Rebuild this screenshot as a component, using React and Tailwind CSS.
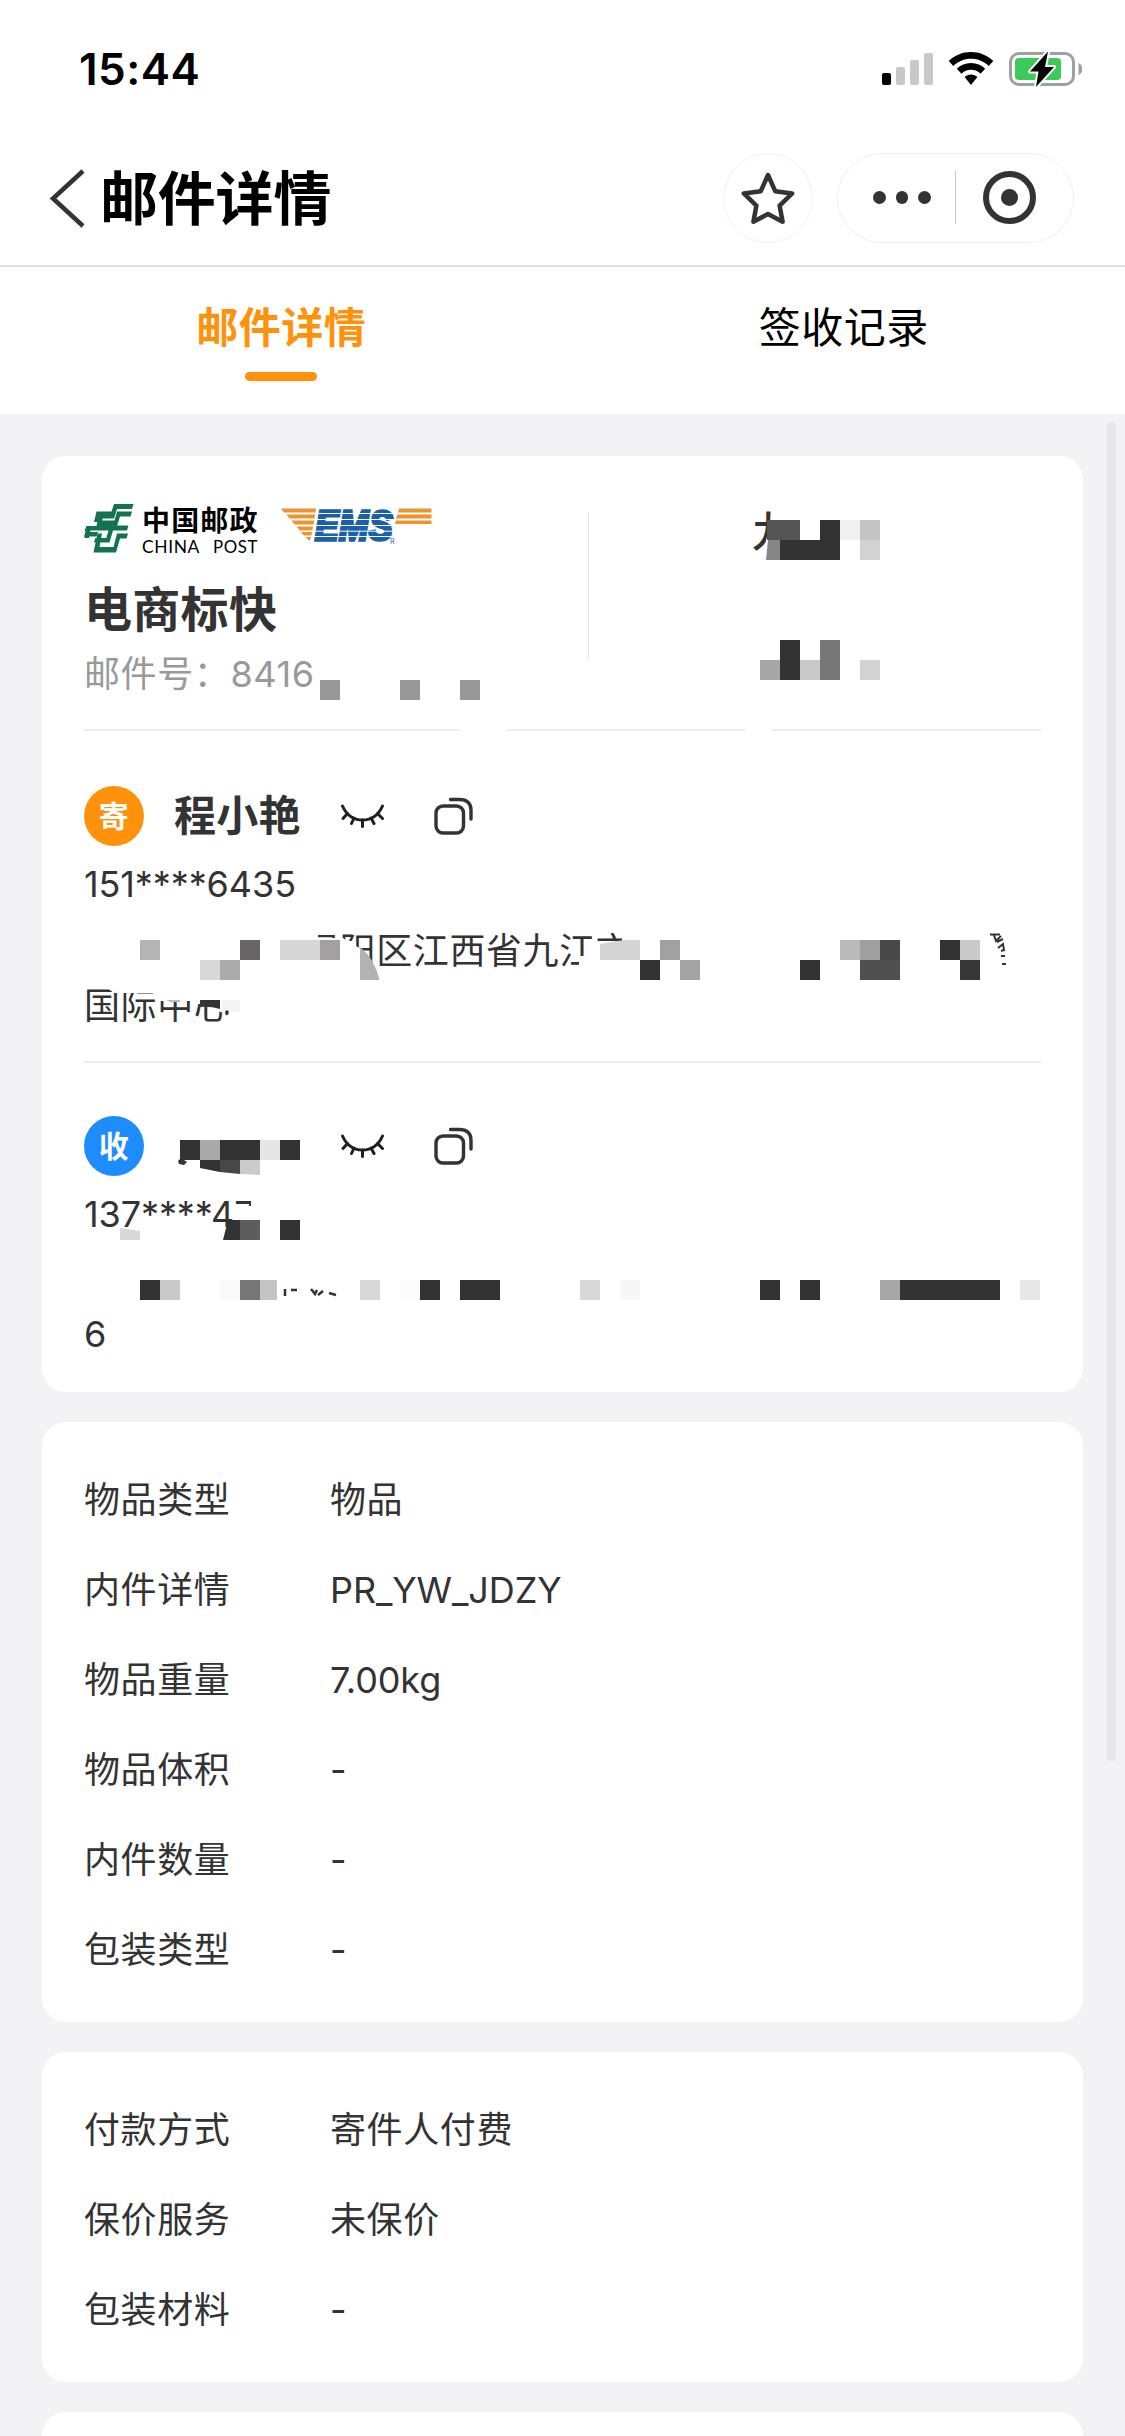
const itemInfo = [
  { label: "物品类型", value: "物品" },
  { label: "内件详情", value: "PR_YW_JDZY", latin: true },
  { label: "物品重量", value: "7.00kg", latin: true },
  { label: "物品体积", value: "-" },
  { label: "内件数量", value: "-" },
  { label: "包装类型", value: "-" },
];

const payInfo = [
  { label: "付款方式", value: "寄件人付费" },
  { label: "保价服务", value: "未保价" },
  { label: "包装材料", value: "-" },
];

// Privacy mosaic, [x, y, width, height, color] in screen pixels
const mosaic = [
  // tracking number
  [320, 680, 20, 20, "#999999"],
  [400, 680, 20, 20, "#999999"],
  [460, 680, 20, 20, "#999999"],
  // destination
  [767, 520, 33, 20, "#555555"],
  [820, 520, 20, 20, "#333333"],
  [840, 520, 20, 20, "#f0f0f0"],
  [860, 520, 20, 20, "#c4c4c4"],
  [780, 540, 60, 20, "#333333"],
  [860, 540, 20, 20, "#d2d2d2"],
  [780, 640, 20, 40, "#333333"],
  [820, 640, 20, 40, "#777777"],
  [760, 660, 20, 20, "#a6a6a6"],
  [800, 660, 20, 20, "#c9c9c9"],
  [860, 660, 20, 20, "#d2d2d2"],
  // sender address
  [140, 940, 20, 20, "#b4b4b4"],
  [240, 940, 20, 20, "#676565"],
  [280, 940, 40, 20, "#d8d7d7"],
  [320, 940, 20, 20, "#a2a0a0"],
  [200, 960, 20, 20, "#d9d9d9"],
  [220, 960, 20, 20, "#ababab"],
  [660, 940, 20, 20, "#a1a1a1"],
  [640, 960, 20, 20, "#333333"],
  [680, 960, 20, 20, "#a3a3a3"],
  [800, 960, 20, 20, "#333333"],
  [840, 940, 20, 20, "#bababa"],
  [860, 940, 20, 20, "#9f9f9f"],
  [880, 940, 20, 20, "#484848"],
  [860, 960, 40, 20, "#505050"],
  [940, 940, 20, 20, "#333333"],
  [960, 940, 20, 20, "#cacaca"],
  [960, 960, 20, 20, "#373737"],
  // receiver name
  [180, 1140, 20, 20, "#333333"],
  [200, 1140, 20, 20, "#a9a9a9"],
  [220, 1140, 40, 20, "#333333"],
  [260, 1140, 20, 20, "#e6e6e6"],
  [280, 1140, 20, 20, "#333333"],
  // receiver phone
  [240, 1220, 20, 20, "#5d5d5d"],
  [280, 1220, 20, 20, "#333333"],
  // receiver address
  [140, 1280, 20, 20, "#333333"],
  [160, 1280, 20, 20, "#c9c9c9"],
  [220, 1280, 20, 20, "#fafafa"],
  [240, 1280, 20, 20, "#767676"],
  [260, 1280, 17, 20, "#c4c4c4"],
  [360, 1280, 20, 20, "#d8d8d8"],
  [400, 1280, 20, 20, "#fbfbfb"],
  [420, 1280, 20, 20, "#333333"],
  [460, 1280, 40, 20, "#333333"],
  [580, 1280, 20, 20, "#d9d9d9"],
  [620, 1280, 20, 20, "#f7f7f7"],
  [760, 1280, 20, 20, "#333333"],
  [800, 1280, 20, 20, "#333333"],
  [880, 1280, 20, 20, "#a7a7a7"],
  [900, 1280, 100, 20, "#333333"],
  [1020, 1280, 20, 20, "#e8e8e8"],
];

const StatusBar = () => (
  <div className="flex h-[132px] items-start justify-between pr-[43px] pl-[79px]">
    <span className="mt-[42px] text-[44px] leading-[54px] font-semibold tracking-[0.5px] text-black">
      15:44
    </span>
    <svg className="mt-[50px]" width="201" height="38" viewBox="881 50 201 38">
      <rect x="882" y="73" width="9" height="12" rx="2" fill="#000" />
      <rect x="896" y="67" width="9" height="18" rx="2" fill="#c8c8c8" />
      <rect x="910" y="60" width="9" height="25" rx="2" fill="#c8c8c8" />
      <rect x="924" y="53" width="9" height="32" rx="2" fill="#c8c8c8" />
      {/* wifi */}
      <path d="M971 52c8.600 0 16.500 3.400 22.300 9l-4.600 5c-4.700-4.500-10.700-7.200-17.700-7.200s-13 2.700-17.700 7.200l-4.600-5c5.800-5.600 13.700-9 22.300-9z" />
      <path d="M971 63c5.500 0 10.500 2.200 14.200 5.700l-4.700 5c-2.500-2.400-5.700-3.900-9.500-3.900s-7 1.500-9.500 3.900l-4.700-5c3.700-3.500 8.700-5.700 14.200-5.700z" />
      <path d="M971 74.500c2.500 0 4.700 1 6.400 2.500l-6.400 8-6.400-8c1.700-1.500 3.900-2.500 6.400-2.500z" />
      {/* battery */}
      <rect x="1010.500" y="53.500" width="63" height="31" rx="8.500" fill="none" stroke="#a0a0a0" strokeWidth="3" />
      <path d="M1078.500 63c2.600 1 3.800 3.300 3.800 6s-1.200 5-3.800 6z" fill="#a0a0a0" />
      <rect x="1015" y="58" width="46" height="22" rx="4" fill="#3ccb5a" />
      <path d="M1048 51.500L1030 71.500h8.500L1036 87l18-20h-9z" fill="#000" stroke="#fff" strokeWidth="4" paintOrder="stroke" strokeLinejoin="round" />
    </svg>
  </div>
);

const NavBar = () => (
  <div className="flex h-[135px] items-center border-b-2 border-[#e0e0e0] pr-[51px] pl-[49px]">
    <svg width="36" height="60" viewBox="49 169 36 60" fill="none" stroke="#333" strokeWidth="4.500">
      <path d="M83 171L53 198.500L83 226" />
    </svg>
    <h1 className="ml-[15px] text-[58px] leading-[80px] font-bold tracking-[-0.2px] text-black">邮件详情</h1>
    <div className="ml-auto flex -translate-y-px gap-[24px]">
      <div className="flex size-[90px] items-center justify-center rounded-full border border-[#f0f0f0]">
        <svg width="54" height="54" viewBox="741 170 54 54" fill="none" stroke="#333" strokeWidth="4.500" strokeLinejoin="round">
          <path d="M768 174l7.200 16.200 17 2.200-12.600 12.300 3 16-14.600-7.700-14.600 7.700 3-16-12.600-12.300 17-2.200z" />
        </svg>
      </div>
      <div className="flex h-[90px] w-[237px] items-center rounded-full border border-[#f0f0f0] pl-[35px]">
        <div className="flex gap-[10px]">
          <span className="size-[12.500px] rounded-full bg-[#333]" />
          <span className="size-[12.500px] rounded-full bg-[#333]" />
          <span className="size-[12.500px] rounded-full bg-[#333]" />
        </div>
        <div className="ml-[24px] h-[53px] w-px bg-[#c4c4c4]" />
        <div className="ml-[27px] flex size-[53px] items-center justify-center rounded-full border-[6px] border-[#333]">
          <span className="size-[17px] rounded-full bg-[#333]" />
        </div>
      </div>
    </div>
  </div>
);

const Tabs = () => (
  <div className="flex h-[147px] pt-[31px] text-[42px] leading-[60px] tracking-[0.5px]">
    <div className="flex flex-1 flex-col items-center font-bold text-[#ff920c]">
      邮件详情
      <span className="mt-[14px] h-[9px] w-[72px] rounded-full bg-[#ff920c]" />
    </div>
    <div className="flex-1 text-center text-black">签收记录</div>
  </div>
);

const ChinaPostLogo = () => (
  <svg width="180" height="60" viewBox="84 502 180 60">
    <g fill="#14734f">
      <path d="M114 504h19.500l-1.500 5h-15l-3 9.500h-14.500l-1 3.500h-4.500l2.500-10.500h15z" />
      <path d="M117 511.500h15l-1.500 5h-10.500l-3 9.500h-14.500l-1 3h-3.500l2.500-8.500h14z" />
      <path d="M86.500 526h10l2-10h4.500l-1.500 9.500h27l-1.500 5h-14l-3.500 12h-15.500l1.300-4.500h11l2.200-7.500h-18l-1.500 7.500h-4.500l1-7h-1z" />
      <path d="M85.500 532h12.500l-1.500 4.500h-12.500z" />
      <path d="M117 533.500h11l-1.500 5h-6.500l-4 14h-22.500l4-19h4.500l-2.500 13.500h14z" />
    </g>
    <text x="142" y="531" fontSize="28" fontWeight="700" textLength="116" fill="#000">中国邮政</text>
    <text x="142" y="552.500" fontSize="17.500" textLength="58" lengthAdjust="spacingAndGlyphs" fill="#000" className="font-['Lato']">CHINA</text>
    <text x="213" y="552.500" fontSize="17.500" textLength="45" lengthAdjust="spacingAndGlyphs" fill="#000" className="font-['Lato']">POST</text>
  </svg>
);

const EmsLogo = () => (
  <svg width="152" height="60" viewBox="280 502 152 60">
    <g fill="#ec9430">
      <path d="M281 508.500h35l-.5 4h-31.500z" />
      <path d="M286.500 514.500h28.700l-.7 4h-25z" />
      <path d="M291.500 520.500h22.700l-.7 4h-19z" />
      <path d="M296.500 526.500h16.500l-.7 4h-12.500z" />
      <path d="M301 532h11l-.7 3.500h-7.500z" />
      <path d="M305.500 537h5.500l-1.500 4z" />
      <path d="M399 508.500h32.500v4h-33.500z" />
      <path d="M397.500 514.500h34v4h-35.500z" />
      <path d="M396 520.500h35.500v3.500h-36.500z" />
    </g>
    <text x="315" y="540" fontSize="43" fontWeight="700" fontStyle="italic" textLength="78" lengthAdjust="spacingAndGlyphs" fill="#1b5fa9" stroke="#1b5fa9" strokeWidth="3.500" className="font-['Liberation_Sans']">EMS</text>
    <path d="M310 513.500h86M310 519.500h86M310 525.500h86M310 531.200h86M310 536.500h86" stroke="#fff" strokeWidth="1" />
    <text x="390" y="544" fontSize="7" fill="#1b5fa9">R</text>
  </svg>
);

const EyeClosed = () => (
  <svg width="44" height="28" viewBox="340 803 44 28" fill="none" stroke="#1f1f1f" strokeWidth="3" strokeLinecap="round">
    <path d="M342.500 807c4 9 11 14 20 14s16-5 20-14" />
    <path d="M347.500 814.500l-4.500 5M354 819l-2.500 5.500M362.500 821v6.500M371 819l3 5.500M377.500 814.500l5 5" />
  </svg>
);

const CopyIcon = () => (
  <svg width="40" height="40" viewBox="433 796 40 40" fill="none" stroke="#333" strokeWidth="3.400" strokeLinecap="round">
    <rect x="436" y="806" width="27.500" height="27" rx="7" />
    <path d="M450.500 799.500h9c7.500 0 11.500 4 11.500 10.500v9" />
  </svg>
);

const PersonHeader = ({ tag, tagClass, name }) => (
  <div className="flex h-[60px] items-center">
    <span
      className={`${tagClass} flex size-[60px] items-center justify-center rounded-full text-[30px] leading-[44px] font-bold text-white`}
    >
      {tag}
    </span>
    <span className="ml-[30px] w-[130px] text-[42px] leading-[60px] font-bold tracking-[0.3px] whitespace-nowrap text-[#333]">
      {name}
    </span>
    <span className="ml-[36px]">
      <EyeClosed />
    </span>
    <span className="ml-[49px]">
      <CopyIcon />
    </span>
  </div>
);

const InfoCard = ({ rows }) => (
  <div className="mt-[30px] rounded-[24px] bg-white px-[42px] pt-[33px] pb-[27px]">
    {rows.map((row) => (
      <div key={row.label} className="flex h-[90px] items-center">
        <span className="w-[246px]">{row.label}</span>
        <span className={row.latin ? "tracking-[-0.1px]" : ""}>{row.value}</span>
      </div>
    ))}
  </div>
);

const MosaicLayer = () => (
  <svg className="absolute inset-0" width="1041" height="936" viewBox="42 456 1041 936">
    {/* blanked areas */}
    <g fill="#fff">
      <path d="M771 500h120v70h-125v-30c4-10 5-20 5-40z" />
      <path d="M313 655h30v50h-30z" />
      <path d="M300 925h18v13h25l4 3h9v5q16 8 21 36h-77z" />
      <path d="M579 956h20v16h-20z" />
      <path d="M600 941h35v32h-35zM622 930h14v14h-14z" />
      <path d="M103 985h146v24l-20 1v-6h-34v-3h-36v-8h-45z" />
      <path d="M459 726h47v8h-47zM746 726h26v8h-26z" />
      <path d="M233 1206h40v34h-40zM251 1195h14v20h-14z" />
    </g>
    {mosaic.map(([x, y, w, h, fill]) => (
      <rect key={`${x}-${y}`} x={x} y={y} width={w} height={h} fill={fill} />
    ))}
    {/* blocks cut by the eraser */}
    <path d="M768 540h12v20h-14z" fill="#868686" />
    <path d="M360 947q15 12 19.500 33h-19.500z" fill="#b2b2b2" />
    <path d="M600 944q18-3.500 26-4h14v20h-40z" fill="#d6d5d5" />
    <path d="M200 1000h20v9q-10-3-20-2z" fill="#333" />
    <path d="M222 1000h18v12h-18z" fill="#f4f4f4" />
    <circle cx="227" cy="1012" r="1.700" fill="#333" />
    <path d="M166 1000h14v2h-10z" fill="#bbb" />
    <path d="M200 1160h20v12l-20-4z" fill="#333" />
    <path d="M220 1160h20v14l-20-2z" fill="#474747" />
    <path d="M240 1160h20v15l-20-1z" fill="#cbcbcb" />
    <path d="M181 1158l6 4-3 3-5-1-1-3z" fill="#333" />
    <path d="M120 1228l20 3v9h-20z" fill="#d8d8d8" />
    <path d="M228 1220h12v20h-17z" fill="#333" />
    {/* leftovers of erased characters */}
    <g fill="none" stroke="#333" strokeWidth="2">
      <path d="M990 934.500h10M994 935l2 6 5-5M997 942l6-3M998 948l5-4 1 6-3 1M1001 956h4M1002 964h4" />
      <path d="M285 1289v7M291 1290h6M311 1289l4 5 2-4M318 1295l5-4M329 1293l7 2" strokeWidth="2.500" />
    </g>
  </svg>
);

const App = () => {
  return (
    <div className="relative h-[2436px] w-[1125px] overflow-hidden bg-white font-['Inter','Noto_Sans_CJK_SC',sans-serif]">
      <StatusBar />
      <NavBar />
      <Tabs />

      <main className="h-[2022px] bg-[#f3f3f5] px-[42px] pt-[42px] text-[36px] leading-[56px] tracking-[0.6px] text-[#333]">
        {/* Waybill card */}
        <section className="relative h-[936px] rounded-[24px] bg-white px-[42px]">
          <div className="flex h-[275px] border-b-2 border-[#eeeeee] pt-[46px]">
            <div className="w-[504px]">
              <div className="flex gap-[16px]">
                <ChinaPostLogo />
                <EmsLogo />
              </div>
              <h2 className="mt-[14px] text-[48px] leading-[68px] font-bold tracking-[0.3px]">电商标快</h2>
              <p className="mt-[2px] text-[#999]">邮件号：8416</p>
            </div>
            <div className="mt-[10px] h-[148px] w-px bg-[#e6e6e6]" />
            <div className="ml-[163px] text-[42px] leading-[60px] font-medium">九江市</div>
          </div>

          <div className="h-[332px] border-b-2 border-[#eeeeee] pt-[55px]">
            <PersonHeader tag="寄" tagClass="bg-[#ff920c]" name="程小艳" />
            <p className="mt-[10px] tracking-[-0.1px]">151****6435</p>
            <p className="mt-[11px] pl-[219px]">浔阳区江西省九江市</p>
            <p className="-mt-px">国际中心</p>
          </div>

          <div className="pt-[53px]">
            <PersonHeader tag="收" tagClass="bg-[#1e8cff]" name="" />
            <p className="mt-[10px] tracking-[-0.1px]">137****47</p>
            <p className="mt-[64px]">6</p>
          </div>

          <MosaicLayer />
        </section>

        <InfoCard rows={itemInfo} />
        <InfoCard rows={payInfo} />
        <div className="mt-[30px] h-[120px] rounded-[24px] bg-white" />
      </main>

      {/* Scrollbar */}
      <div className="absolute top-[422px] right-[9px] h-[1339px] w-[9px] rounded-full bg-[#e7e7e9]" />
    </div>
  );
};

export default App;
